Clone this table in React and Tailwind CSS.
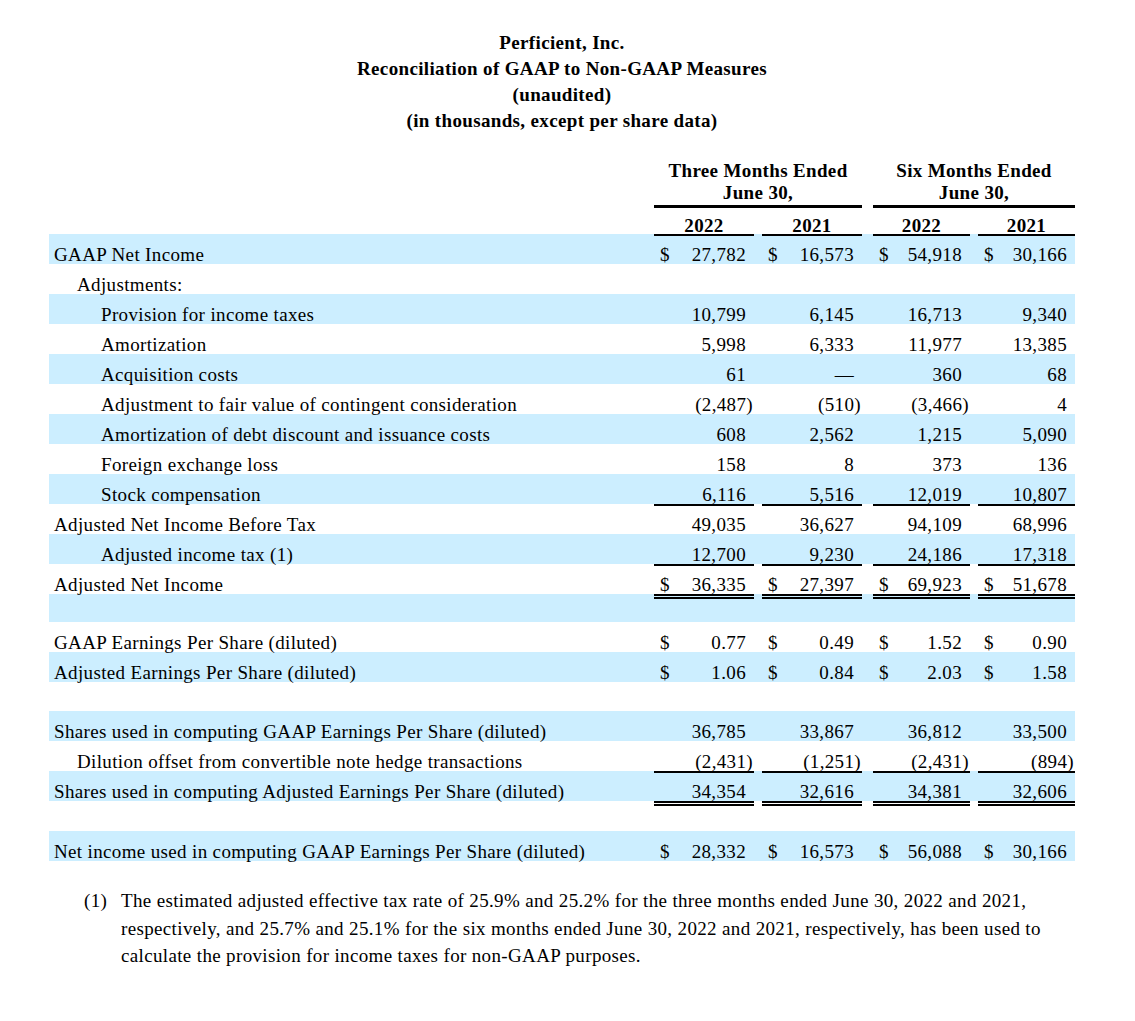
import React from 'react';

const COLS = ['w-[100px]', 'w-[100px]', 'w-[97px]', 'w-[97px]'];
const GAPS = ['w-[8px]', 'w-[11px]', 'w-[8px]'];
const INDENT = ['pl-[5px]', 'pl-[28px]', 'pl-[52px]'];

const rows = [
    { label: 'GAAP Net Income', blue: true, dollar: true, line: 'single', vals: ['27,782', '16,573', '54,918', '30,166'] },
    { label: 'Adjustments:', indent: 1 },
    { label: 'Provision for income taxes', indent: 2, blue: true, vals: ['10,799', '6,145', '16,713', '9,340'] },
    { label: 'Amortization', indent: 2, vals: ['5,998', '6,333', '11,977', '13,385'] },
    { label: 'Acquisition costs', indent: 2, blue: true, vals: ['61', '—', '360', '68'] },
    { label: 'Adjustment to fair value of contingent consideration', indent: 2, vals: ['(2,487)', '(510)', '(3,466)', '4'] },
    { label: 'Amortization of debt discount and issuance costs', indent: 2, blue: true, vals: ['608', '2,562', '1,215', '5,090'] },
    { label: 'Foreign exchange loss', indent: 2, vals: ['158', '8', '373', '136'] },
    { label: 'Stock compensation', indent: 2, blue: true, vals: ['6,116', '5,516', '12,019', '10,807'] },
    { label: 'Adjusted Net Income Before Tax', line: 'single', vals: ['49,035', '36,627', '94,109', '68,996'] },
    { label: 'Adjusted income tax (1)', indent: 2, blue: true, vals: ['12,700', '9,230', '24,186', '17,318'] },
    { label: 'Adjusted Net Income', dollar: true, line: 'single', vals: ['36,335', '27,397', '69,923', '51,678'] },
    { blue: true, line: 'double', h: 'h-[28px]' },
    { label: 'GAAP Earnings Per Share (diluted)', dollar: true, vals: ['0.77', '0.49', '1.52', '0.90'] },
    { label: 'Adjusted Earnings Per Share (diluted)', blue: true, dollar: true, vals: ['1.06', '0.84', '2.03', '1.58'] },
    { h: 'h-[29px]' },
    { label: 'Shares used in computing GAAP Earnings Per Share (diluted)', blue: true, vals: ['36,785', '33,867', '36,812', '33,500'] },
    { label: 'Dilution offset from convertible note hedge transactions', indent: 1, vals: ['(2,431)', '(1,251)', '(2,431)', '(894)'] },
    { label: 'Shares used in computing Adjusted Earnings Per Share (diluted)', blue: true, line: 'single', vals: ['34,354', '32,616', '34,381', '32,606'] },
    { line: 'double' },
    { label: 'Net income used in computing GAAP Earnings Per Share (diluted)', blue: true, dollar: true, vals: ['28,332', '16,573', '56,088', '30,166'] },
];

function Row({ label, indent = 0, blue, vals = [], dollar, line, h = 'h-[30px]' }) {
    const top = line === 'single'
        ? 'border-t-2 border-black pt-[8px]'
        : line === 'double'
            ? 'border-t-[5px] border-double border-black pt-[5px]'
            : 'pt-[10px]';

    const cells = [];
    COLS.forEach((w, i) => {
        const v = vals[i] || '';
        const neg = v.startsWith('(');
        cells.push(
            <div key={'c' + i} className={`${w} ${top} flex justify-between leading-[22px] pl-[6px] ${neg ? 'pr-[1px]' : 'pr-[8px]'}`}>
                <span>{dollar ? '$' : ''}</span>
                <span>{v}</span>
            </div>
        );
        if (i < GAPS.length) cells.push(<div key={'g' + i} className={GAPS[i]} />);
    });

    return (
        <div className={`flex ${h} ${blue ? 'bg-[#cceeff]' : ''}`}>
            <div className={`w-[605px] pt-[10px] leading-[22px] whitespace-nowrap ${INDENT[indent]}`}>{label}</div>
            {cells}
        </div>
    );
}

export default function App() {
    return (
        <div className="w-[1135px] min-h-[1021px] bg-white text-black font-['Liberation_Serif','Times_New_Roman',serif] text-[19px] tracking-[0.35px]">
            <div className="ml-[49px] w-[1026px] pt-[30px]">
                {/* Title */}
                <div className="text-center font-bold leading-[26px]">
                    <div>Perficient, Inc.</div>
                    <div>Reconciliation of GAAP to Non-GAAP Measures</div>
                    <div>(unaudited)</div>
                    <div>(in thousands, except per share data)</div>
                </div>

                {/* Column headers */}
                <div className="mt-[26px] flex font-bold">
                    <div className="w-[605px]" />
                    <div className="w-[208px] border-b-[3px] border-black pb-[1px] text-center leading-[22px]">
                        <div>Three Months Ended</div>
                        <div>June 30,</div>
                    </div>
                    <div className="w-[11px]" />
                    <div className="w-[202px] border-b-[3px] border-black pb-[1px] text-center leading-[22px]">
                        <div>Six Months Ended</div>
                        <div>June 30,</div>
                    </div>
                </div>
                <div className="flex h-[26px] font-bold">
                    <div className="w-[605px]" />
                    <div className="w-[100px] pt-[7px] text-center leading-[22px]">2022</div>
                    <div className="w-[8px]" />
                    <div className="w-[100px] pt-[7px] text-center leading-[22px]">2021</div>
                    <div className="w-[11px]" />
                    <div className="w-[97px] pt-[7px] text-center leading-[22px]">2022</div>
                    <div className="w-[8px]" />
                    <div className="w-[97px] pt-[7px] text-center leading-[22px]">2021</div>
                </div>

                {/* Body */}
                {rows.map((r, i) => (
                    <Row key={i} {...r} />
                ))}

                {/* Footnote */}
                <div className="mt-[26px] flex leading-[27.5px]">
                    <div className="w-[72px] shrink-0 pl-[35px]">(1)</div>
                    <div className="flex-1">
                        The estimated adjusted effective tax rate of 25.9% and 25.2% for the three months ended June 30, 2022 and 2021, respectively, and 25.7% and 25.1% for the six months ended June 30, 2022 and 2021, respectively, has been used to calculate the provision for income taxes for non-GAAP purposes.
                    </div>
                </div>
            </div>
        </div>
    );
}
